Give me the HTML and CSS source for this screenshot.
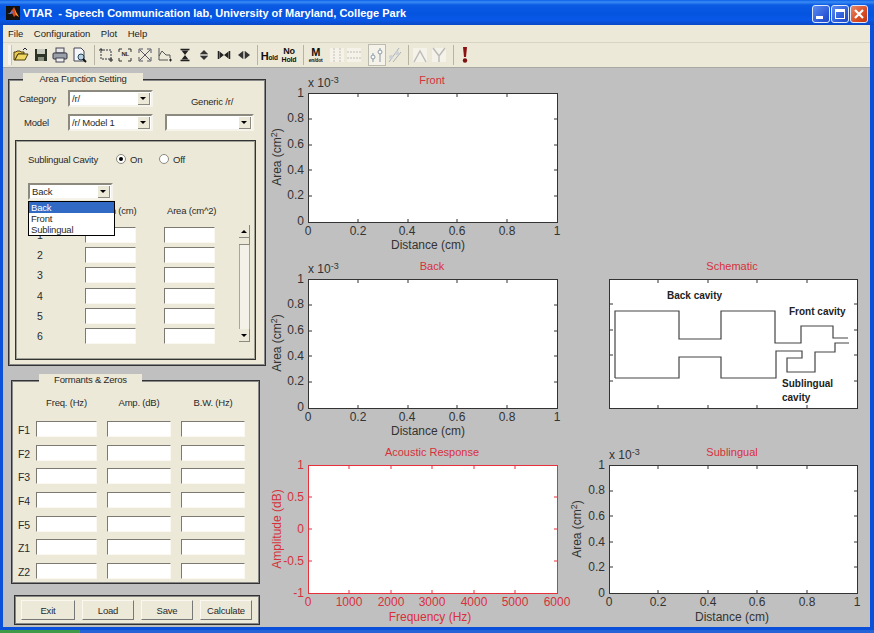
FILE: index.html
```html
<!DOCTYPE html>
<html lang="en">
<head>
    <meta charset="UTF-8">
    <title>VTAR - Speech Communication lab, University of Maryland, College Park</title>
    <link rel="stylesheet" href="styles.css">
</head>
<body>
<div class="window">
    <!-- Title bar -->
    <div class="titlebar">
        <svg class="app-icon" width="14" height="14" viewBox="0 0 14 14">
            <rect width="14" height="14" fill="#111"/>
            <path d="M1 8l3-1 2-3 2-3 2 5 3 5-3-2-2 2-2-4-2 0z" fill="#d8481c"/>
            <path d="M1 8l3-1 2-3 1 3-2 1z" fill="#5a7fd0"/>
            <path d="M8 1l2 5 3 5-3-2z" fill="#f2a030"/>
        </svg>
        <span class="title-text">VTAR&nbsp; - Speech Communication lab, University of Maryland, College Park</span>
        <div class="win-buttons">
            <div class="win-btn"><span class="glyph-min"></span></div>
            <div class="win-btn"><span class="glyph-max"></span></div>
            <div class="win-btn close">
                <svg width="12" height="12" viewBox="0 0 12 12"><path d="M2 2l8 8M10 2l-8 8" stroke="#fff" stroke-width="2.2"/></svg>
            </div>
        </div>
    </div>

    <!-- Menu -->
    <div class="menubar">
        <span>File</span>
        <span>Configuration</span>
        <span>Plot</span>
        <span>Help</span>
    </div>

    <!-- Toolbar -->
    <div class="toolbar">
        <div class="grip"></div>
        <div class="tool first">
            <svg width="16" height="16" viewBox="0 0 16 16"><path d="M1 13V5h2l1-1h3l1 1h3v2H5L2 13z" fill="#e8c850" stroke="#4a3c10"/><path d="M2 13l3-6h10l-3 6z" fill="#f0d860" stroke="#4a3c10"/><path d="M10 3l2-2 2 2" fill="none" stroke="#223"/></svg>
        </div>
        <div class="tool">
            <svg width="16" height="16" viewBox="0 0 16 16"><path d="M2 2h12v12H2z" fill="#2c3428"/><rect x="4" y="2" width="8" height="5" fill="#c8ccc0"/><rect x="5" y="10" width="6" height="4" fill="#8a9080"/></svg>
        </div>
        <div class="tool">
            <svg width="16" height="16" viewBox="0 0 16 16"><rect x="4" y="1" width="8" height="5" fill="#e8e8e8" stroke="#445"/><rect x="1" y="6" width="14" height="6" rx="1" fill="#9aa0a8" stroke="#334"/><rect x="4" y="11" width="8" height="4" fill="#eee" stroke="#445"/></svg>
        </div>
        <div class="tool">
            <svg width="16" height="16" viewBox="0 0 16 16"><path d="M2 1h7l3 3v10H2z" fill="#f4f6fa" stroke="#445"/><circle cx="9" cy="10" r="3" fill="#b8d0e0" stroke="#245"/><path d="M11 12l3 3" stroke="#111" stroke-width="2"/></svg>
        </div>
        <div class="sep"></div>
        <div class="tool">
            <svg width="16" height="16" viewBox="0 0 16 16"><path d="M3 1v11h10V3H3" fill="none" stroke="#334" stroke-dasharray="2 1"/><path d="M1 3h4M13 11v4M11 13h4" stroke="#222"/></svg>
        </div>
        <div class="tool">
            <svg width="16" height="16" viewBox="0 0 16 16"><path d="M2 5V2h3M11 2h3v3M14 11v3h-3M5 14H2v-3" fill="none" stroke="#333"/></svg>
            <span class="tool-mini">NL</span>
        </div>
        <div class="tool">
            <svg width="16" height="16" viewBox="0 0 16 16"><path d="M3 3l10 10M13 3L3 13" stroke="#556"/><path d="M2 6V2h4M10 2h4v4M14 10v4h-4M6 14H2v-4" fill="none" stroke="#556"/></svg>
        </div>
        <div class="tool">
            <svg width="16" height="16" viewBox="0 0 16 16"><path d="M2 1v12h9" fill="none" stroke="#555"/><path d="M2 9l3-5 4 4h4v3" fill="none" stroke="#555"/><path d="M12 13h3M13.500 11.500v3" stroke="#222"/></svg>
        </div>
        <div class="tool">
            <svg width="16" height="16" viewBox="0 0 16 16"><path d="M3.500 2.500h9M3.500 13.500h9" stroke="#222" stroke-width="1.500"/><path d="M4.500 3.500h7L8 8zM4.500 12.500h7L8 8z" fill="#222"/></svg>
        </div>
        <div class="tool">
            <svg width="16" height="16" viewBox="0 0 16 16"><path d="M8 3l4 4H4zM8 13l4-4H4z" fill="#333"/><path d="M4 8h8" stroke="#777"/></svg>
        </div>
        <div class="tool">
            <svg width="16" height="16" viewBox="0 0 16 16"><path d="M2.500 4v8M13.500 4v8" stroke="#222" stroke-width="1.500"/><path d="M3.500 4.500v7L8 8zM12.500 4.500v7L8 8z" fill="#222"/></svg>
        </div>
        <div class="tool">
            <svg width="16" height="16" viewBox="0 0 16 16"><path d="M2 8l5-4v8zM14 8l-5-4v8z" fill="#333"/><path d="M8 4v8" stroke="#777"/></svg>
        </div>
        <div class="sep"></div>
        <div class="tool text-tool"><span class="big">H</span><span class="small">old</span></div>
        <div class="tool text-tool stacked"><span class="big-no">No</span><span class="small-hold">Hold</span></div>
        <div class="sep m-sep"></div>
        <div class="tool text-tool stacked"><span class="big-m">M</span><span class="small-dot">en/dot</span></div>
        <div class="tool faded wide-gap">
            <svg width="16" height="16" viewBox="0 0 16 16"><rect x="1" y="1" width="14" height="14" fill="#f6f4ec"/><path d="M5 1v14M11 1v14" stroke="#b8b8b0" stroke-dasharray="2 1"/></svg>
        </div>
        <div class="tool faded">
            <svg width="16" height="16" viewBox="0 0 16 16"><rect x="1" y="1" width="14" height="14" fill="#f6f4ec"/><path d="M1 5h14M1 11h14" stroke="#b8b8b0" stroke-dasharray="2 1"/></svg>
        </div>
        <div class="tool faded pressed">
            <svg width="16" height="16" viewBox="0 0 16 16"><path d="M4 6v9M11 1v14" stroke="#7c8ea0"/><circle cx="4" cy="10" r="2" fill="#fff" stroke="#7c8ea0"/><circle cx="11" cy="5" r="2" fill="#fff" stroke="#7c8ea0"/></svg>
        </div>
        <div class="tool faded">
            <svg width="16" height="16" viewBox="0 0 16 16"><path d="M3 15l10-14M7 15l8-10" stroke="#a0a8b4"/><circle cx="5" cy="10" r="2" fill="#c8ccd4"/><circle cx="11" cy="6" r="2" fill="#c8ccd4"/></svg>
        </div>
        <div class="sep"></div>
        <div class="tool faded">
            <svg width="16" height="16" viewBox="0 0 16 16"><rect x="1" y="1" width="14" height="14" fill="#f6f4ec"/><path d="M2 15l6-11 6 11" fill="none" stroke="#b4b4b4" stroke-width="1.500"/></svg>
        </div>
        <div class="tool faded">
            <svg width="16" height="16" viewBox="0 0 16 16"><rect x="1" y="1" width="14" height="14" fill="#f6f4ec"/><path d="M2 1l6 8 6-8M8 9v6" fill="none" stroke="#b4b4b4" stroke-width="1.500"/></svg>
        </div>
        <div class="sep"></div>
        <div class="tool">
            <svg width="16" height="16" viewBox="0 0 16 16"><path d="M6 0h4l-1 10H7z" fill="#8c1010"/><circle cx="8" cy="13.500" r="2.200" fill="#7c1010"/></svg>
        </div>
    </div>

    <div class="figure">
        <!-- Left side controls -->
        <div class="controls">
            <div class="panel area-panel">
                <div class="legend area-legend">Area Function Setting</div>
                <div class="top-grid">
                    <div class="label cat-label">Category</div>
                    <div class="combo cat-combo"><span>/r/</span><i class="arrow"></i></div>
                    <div class="label generic-label">Generic /r/</div>
                    <div class="label model-label">Model</div>
                    <div class="combo model-combo"><span>/r/ Model 1</span><i class="arrow"></i></div>
                    <div class="combo generic-combo"><span></span><i class="arrow"></i></div>
                </div>

                <div class="inner-panel">
                    <div class="radio-row">
                        <span class="label sub-label">Sublingual Cavity</span>
                        <span class="radio checked"></span><span class="label on-label">On</span>
                        <span class="radio"></span><span class="label">Off</span>
                    </div>
                    <div class="combo back-combo"><span>Back</span><i class="arrow"></i></div>

                    <!-- open dropdown over the table -->
                    <div class="dropdown">
                        <div class="active">Back</div>
                        <div>Front</div>
                        <div>Sublingual</div>
                    </div>

                    <div class="section-table">
                        <div class="section-rows">
                            <div class="section-head"><span class="col-len">Length (cm)</span><span class="col-area">Area (cm^2)</span></div>
                            <div class="section-row"><span class="num">1</span><input class="field" readonly><input class="field" readonly></div>
                            <div class="section-row"><span class="num">2</span><input class="field" readonly><input class="field" readonly></div>
                            <div class="section-row"><span class="num">3</span><input class="field" readonly><input class="field" readonly></div>
                            <div class="section-row"><span class="num">4</span><input class="field" readonly><input class="field" readonly></div>
                            <div class="section-row"><span class="num">5</span><input class="field" readonly><input class="field" readonly></div>
                            <div class="section-row"><span class="num">6</span><input class="field" readonly><input class="field" readonly></div>
                        </div>
                        <div class="scrollbar">
                            <div class="sb-btn"><i class="arrow up"></i></div>
                            <div class="sb-thumb"></div>
                            <div class="sb-track"></div>
                            <div class="sb-btn"><i class="arrow"></i></div>
                        </div>
                    </div>
                </div>
            </div>

            <div class="panel formant-panel">
                <div class="legend formant-legend">Formants &amp; Zeros</div>
                <div class="formant-grid">
                    <span></span><span class="head">Freq. (Hz)</span><span class="head">Amp. (dB)</span><span class="head">B.W. (Hz)</span>
                    <span class="label">F1</span><input class="field" readonly><input class="field" readonly><input class="field" readonly>
                    <span class="label">F2</span><input class="field" readonly><input class="field" readonly><input class="field" readonly>
                    <span class="label">F3</span><input class="field" readonly><input class="field" readonly><input class="field" readonly>
                    <span class="label">F4</span><input class="field" readonly><input class="field" readonly><input class="field" readonly>
                    <span class="label">F5</span><input class="field" readonly><input class="field" readonly><input class="field" readonly>
                    <span class="label">Z1</span><input class="field" readonly><input class="field" readonly><input class="field" readonly>
                    <span class="label">Z2</span><input class="field" readonly><input class="field" readonly><input class="field" readonly>
                </div>
            </div>

            <div class="panel button-panel">
                <button class="btn exit">Exit</button>
                <button class="btn">Load</button>
                <button class="btn">Save</button>
                <button class="btn">Calculate</button>
            </div>
        </div>

        <!-- Plots -->
        <div class="plots">
            <svg class="plot" width="300" height="186">
                <text class="ptitle" x="166" y="12">Front</text>
                <text class="tick" x="42" y="15">x 10<tspan class="sup" dy="-4">-3</tspan></text>
                <rect class="axes" x="42.500" y="21.500" width="249" height="129"/>
                <path class="ticks" d="M92 22v3M142 22v3M191 22v3M241 22v3M92 150v-3M142 150v-3M191 150v-3M241 150v-3M43 47h3M43 73h3M43 98h3M43 124h3M291 47h-3M291 73h-3M291 98h-3M291 124h-3"/>
                <g class="yticks"><text x="38" y="25">1</text><text x="38" y="50">0.8</text><text x="38" y="76">0.6</text><text x="38" y="102">0.4</text><text x="38" y="127">0.2</text><text x="38" y="153">0</text></g>
                <g class="xticks"><text x="42" y="163">0</text><text x="92" y="163">0.2</text><text x="141" y="163">0.4</text><text x="191" y="163">0.6</text><text x="241" y="163">0.8</text><text x="291" y="163">1</text></g>
                <text class="xlabel" x="162" y="177">Distance (cm)</text>
                <text class="ylabel" transform="translate(15 85) rotate(-90)">Area (cm<tspan class="sup" dy="-4">2</tspan><tspan dy="4">)</tspan></text>
            </svg>
            <svg class="plot" width="300" height="186"></svg>

            <svg class="plot" width="300" height="186">
                <text class="ptitle" x="166" y="12">Back</text>
                <text class="tick" x="42" y="15">x 10<tspan class="sup" dy="-4">-3</tspan></text>
                <rect class="axes" x="42.500" y="21.500" width="249" height="129"/>
                <path class="ticks" d="M92 22v3M142 22v3M191 22v3M241 22v3M92 150v-3M142 150v-3M191 150v-3M241 150v-3M43 47h3M43 73h3M43 98h3M43 124h3M291 47h-3M291 73h-3M291 98h-3M291 124h-3"/>
                <g class="yticks"><text x="38" y="25">1</text><text x="38" y="50">0.8</text><text x="38" y="76">0.6</text><text x="38" y="102">0.4</text><text x="38" y="127">0.2</text><text x="38" y="153">0</text></g>
                <g class="xticks"><text x="42" y="163">0</text><text x="92" y="163">0.2</text><text x="141" y="163">0.4</text><text x="191" y="163">0.6</text><text x="241" y="163">0.8</text><text x="291" y="163">1</text></g>
                <text class="xlabel" x="162" y="177">Distance (cm)</text>
                <text class="ylabel" transform="translate(15 85) rotate(-90)">Area (cm<tspan class="sup" dy="-4">2</tspan><tspan dy="4">)</tspan></text>
            </svg>
            <svg class="plot" width="300" height="186">
                <text class="ptitle" x="164" y="12">Schematic</text>
                <rect class="axes" x="41.500" y="21.500" width="248" height="129"/>
                <path class="ticks" d="M90 22v3M140 22v3M189 22v3M239 22v3M90 150v-3M140 150v-3M189 150v-3M239 150v-3M42 46h3M42 72h3M42 97h3M42 123h3M289 46h-3M289 72h-3M289 97h-3M289 123h-3"/>
                <path class="shape" d="M47 120V53H111V81H153V53H207V85H233V68H265V80H280M47 120H111V99H153V120H208V93H234V100H219V114H247V94H267V85H281"/>
                <text class="note" x="99" y="41">Back cavity</text>
                <text class="note" x="221" y="57">Front cavity</text>
                <text class="note" x="214" y="129">Sublingual</text>
                <text class="note" x="214" y="143">cavity</text>
            </svg>

            <svg class="plot red" width="300" height="186">
                <text class="ptitle" x="166" y="12">Acoustic Response</text>
                <rect class="axes" x="42.500" y="21.500" width="249" height="128"/>
                <path class="ticks" d="M83 22v3M125 22v3M166 22v3M208 22v3M249 22v3M83 149v-3M125 149v-3M166 149v-3M208 149v-3M249 149v-3M43 53h3M43 85h3M43 117h3M291 53h-3M291 85h-3M291 117h-3"/>
                <g class="yticks"><text x="38" y="25">1</text><text x="38" y="57">0.5</text><text x="38" y="89">0</text><text x="38" y="121">-0.5</text><text x="38" y="153">-1</text></g>
                <g class="xticks"><text x="42" y="162">0</text><text x="83" y="162">1000</text><text x="125" y="162">2000</text><text x="166" y="162">3000</text><text x="208" y="162">4000</text><text x="249" y="162">5000</text><text x="291" y="162">6000</text></g>
                <text class="xlabel" x="164" y="177">Frequency (Hz)</text>
                <text class="ylabel" transform="translate(15 85) rotate(-90)">Amplitude (dB)</text>
            </svg>
            <svg class="plot" width="300" height="186">
                <text class="ptitle" x="164" y="12">Sublingual</text>
                <text class="tick" x="41" y="15">x 10<tspan class="sup" dy="-4">-3</tspan></text>
                <rect class="axes" x="41.500" y="21.500" width="248" height="128"/>
                <path class="ticks" d="M90 22v3M140 22v3M189 22v3M239 22v3M90 149v-3M140 149v-3M189 149v-3M239 149v-3M42 47h3M42 72h3M42 98h3M42 123h3M289 47h-3M289 72h-3M289 98h-3M289 123h-3"/>
                <g class="yticks"><text x="37" y="25">1</text><text x="37" y="50">0.8</text><text x="37" y="76">0.6</text><text x="37" y="102">0.4</text><text x="37" y="127">0.2</text><text x="37" y="153">0</text></g>
                <g class="xticks"><text x="41" y="162">0</text><text x="90" y="162">0.2</text><text x="140" y="162">0.4</text><text x="189" y="162">0.6</text><text x="239" y="162">0.8</text><text x="289" y="162">1</text></g>
                <text class="xlabel" x="164" y="177">Distance (cm)</text>
                <text class="ylabel" transform="translate(13 85) rotate(-90)">Area (cm<tspan class="sup" dy="-4">2</tspan><tspan dy="4">)</tspan></text>
            </svg>
        </div>
    </div>

    <div class="taskbar"><div class="start"></div></div>
</div>
</body>
</html>
```

FILE: styles.css
```css
html, body {
    margin: 0;
    padding: 0;
    background: #0a4bd0;
}
body {
    width: 874px;
    height: 633px;
    overflow: hidden;
    font-family: "Liberation Sans", Arial, sans-serif;
    font-size: 9.5px;
    letter-spacing: -0.2px;
    color: #2a2a2a;
}
.window {
    width: 874px;
    height: 633px;
    display: flex;
    flex-direction: column;
    box-sizing: border-box;
    padding: 0 4px 0 3px;
    background: #0a50d8;
}

/* title bar */
.titlebar {
    height: 25px;
    margin: 0 -4px 0 -3px;
    padding: 0 6px;
    display: flex;
    align-items: center;
    flex: none;
    background: linear-gradient(#0a5fe8 0, #3a8cf4 2px, #0a5ae4 5px, #0554e0 14px, #0a58e8 20px, #0a48c4 25px);
    color: #fff;
}
.app-icon {
    flex: none;
    margin-top: 1px;
}
.title-text {
    margin-left: 3px;
    font-size: 11px;
    font-weight: bold;
    letter-spacing: 0;
    white-space: nowrap;
}
.win-buttons {
    margin-left: auto;
    margin-top: 3px;
    display: flex;
    gap: 1px;
}
.win-btn {
    width: 18px;
    height: 18px;
    box-sizing: border-box;
    border: 1px solid #dfe8fa;
    border-radius: 3px;
    background: linear-gradient(135deg, #5a8cf0, #2a58d8 70%, #2048c0);
    position: relative;
    display: flex;
    align-items: center;
    justify-content: center;
}
.win-btn.close {
    background: linear-gradient(135deg, #e88868, #d84c24 60%, #c03810);
}
.glyph-min {
    position: absolute;
    left: 3px;
    bottom: 3px;
    width: 7px;
    height: 3px;
    background: #fff;
}
.glyph-max {
    width: 8px;
    height: 6px;
    border: 1px solid #fff;
    border-top-width: 3px;
}

/* menu */
.menubar {
    height: 17px;
    flex: none;
    display: flex;
    align-items: center;
    gap: 10.5px;
    padding-left: 5px;
    background: #ece9d8;
    color: #222;
    font-size: 9.5px;
    letter-spacing: 0;
}

/* toolbar */
.toolbar {
    height: 24px;
    flex: none;
    display: flex;
    align-items: center;
    background: #ece9d8;
    border-top: 1px solid #d8d4c4;
    border-bottom: 1px solid #a8a8a4;
    padding-left: 5px;
}
.grip {
    width: 3px;
    height: 20px;
    background: #f6f4ec;
    border-right: 1px solid #c8c4b4;
}
.tool {
    width: 16px;
    height: 20px;
    margin-right: 3.7px;
    display: flex;
    align-items: center;
    justify-content: center;
    position: relative;
    flex: none;
}
.tool.first {
    margin-left: 1px;
}
.tool.wide-gap {
    margin-left: 2px;
    margin-right: 1px;
}
.tool.pressed {
    background: #f6f4ec;
    outline: 1px solid #b4b4a8;
    margin-left: 3px;
    margin-right: 1px;
}
.tool.faded {
    opacity: 0.85;
}
.tool-mini {
    position: absolute;
    left: 4px;
    top: 6px;
    font-size: 6px;
    font-weight: bold;
    letter-spacing: -0.3px;
}
.sep {
    width: 1px;
    height: 20px;
    margin: 0 3px 0 2px;
    background: #b8b4a4;
    flex: none;
}
.sep.m-sep {
    margin-right: 4px;
}
.text-tool {
    align-items: baseline;
    color: #111;
    font-weight: bold;
    line-height: 1;
    padding-top: 6px;
    box-sizing: border-box;
    white-space: nowrap;
}
.text-tool .big {
    font-size: 11px;
}
.text-tool .small {
    font-size: 6.5px;
}
.stacked {
    flex-direction: column;
    align-items: center;
    justify-content: center;
    padding-top: 0;
}
.big-no {
    font-size: 9px;
    line-height: 9px;
}
.small-hold {
    font-size: 7px;
    line-height: 8px;
}
.big-m {
    font-size: 11px;
    line-height: 10px;
}
.small-dot {
    font-size: 5px;
    line-height: 6px;
}

/* figure area */
.figure {
    flex: 1;
    min-height: 0;
    display: flex;
    background: #c0c0c0;
}
.controls {
    width: 263px;
    flex: none;
    padding: 11px 0 0 5px;
    box-sizing: border-box;
}
.panel {
    background: #ece9d8;
    border: 1px solid #333;
    box-shadow: inset 0 0 0 1px #888;
    box-sizing: border-box;
    position: relative;
}
.legend {
    position: absolute;
    top: -7px;
    height: 9px;
    line-height: 11px;
    text-align: center;
    background: #ece9d8;
    box-sizing: border-box;
}
.area-legend {
    left: 14px;
    width: 120px;
}
.formant-legend {
    left: 27px;
    width: 103px;
}
.label {
    white-space: nowrap;
}

.area-panel {
    width: 258px;
    height: 287px;
}
.top-grid {
    display: grid;
    grid-template-columns: 59px 85px 12px 89px;
    grid-template-rows: 17px 17px;
    row-gap: 7px;
    padding: 10px 0 0 0;
    height: 51px;
    box-sizing: content-box;
    align-items: center;
}
.cat-label {
    padding-left: 10px;
}
.model-label {
    padding-left: 15px;
    grid-column: 1;
    grid-row: 2;
}
.cat-combo, .model-combo {
    grid-column: 2;
}
.generic-label {
    grid-column: 4;
    text-align: center;
    padding-top: 5px;
    padding-left: 5px;
}
.generic-combo {
    grid-column: 4;
    grid-row: 2;
}
.model-combo {
    grid-row: 2;
}

.combo {
    height: 17px;
    box-sizing: border-box;
    display: flex;
    align-items: center;
    justify-content: space-between;
    background: #fff;
    border: 2px solid;
    border-color: #8c8a7e #f6f4ea #f6f4ea #8c8a7e;
    padding: 0 1px 0 2px;
}
.arrow {
    width: 12px;
    height: 12px;
    background: #ece9d8;
    border-right: 1px solid #8c8a7e;
    border-bottom: 1px solid #8c8a7e;
    box-sizing: border-box;
    position: relative;
    display: block;
    flex: none;
}
.arrow::after {
    content: "";
    position: absolute;
    left: 2px;
    top: 4px;
    border: 3.5px solid transparent;
    border-top-color: #000;
    border-bottom: 0;
}
.arrow.up::after {
    border-top: 0;
    border-bottom: 3.5px solid #000;
}

.inner-panel {
    margin: -1px 0 0 6px;
    width: 241px;
    height: 220px;
    border: 1px solid #333;
    box-shadow: inset 0 0 0 1px #a0a094;
    box-sizing: border-box;
    position: relative;
    padding: 11px 0 0 12px;
}
.radio-row {
    display: flex;
    align-items: center;
    height: 14px;
}
.sub-label {
    width: 88px;
}
.on-label {
    width: 29px;
}
.radio {
    width: 10px;
    height: 10px;
    border-radius: 50%;
    background: #fff;
    border: 1px solid #8c8a7e;
    box-sizing: border-box;
    margin-right: 4px;
    position: relative;
}
.radio.checked::after {
    content: "";
    position: absolute;
    left: 2px;
    top: 2px;
    width: 4px;
    height: 4px;
    border-radius: 50%;
    background: #000;
}
.back-combo {
    width: 85px;
    margin-top: 17px;
}
.dropdown {
    position: absolute;
    left: 12px;
    top: 60px;
    width: 87px;
    height: 35px;
    border: 1px solid #000;
    background: #fff;
    box-sizing: border-box;
    z-index: 2;
    line-height: 11px;
}
.dropdown div {
    padding-left: 2px;
}
.dropdown .active {
    background: #316ac5;
    color: #fff;
}

.section-table {
    display: flex;
    margin-top: 1px;
}
.section-rows {
    width: 211px;
}
.section-head {
    height: 20px;
    position: relative;
    margin-top: 4px;
}
.section-head span {
    position: absolute;
    top: 0;
    white-space: nowrap;
}
.col-len {
    left: 60px;
}
.col-area {
    left: 139px;
}
.section-row {
    display: flex;
    align-items: center;
    height: 20.2px;
}
.num {
    width: 57px;
    flex: none;
    padding-left: 9px;
    box-sizing: border-box;
    font-size: 10.5px;
}
.field {
    width: 51px;
    height: 16px;
    padding: 0;
    margin: 0 28px 0 0;
    flex: none;
    box-sizing: border-box;
    background: #fff;
    border: 1px solid;
    border-color: #7c7a70 #faf8f0 #faf8f0 #7c7a70;
    outline: none;
    display: block;
}
.section-row .field:last-child {
    margin-right: 0;
}
.scrollbar {
    width: 11px;
    height: 117px;
    margin: 24px 0 0 0;
    display: flex;
    flex-direction: column;
}
.sb-btn {
    height: 13px;
    flex: none;
}
.sb-btn .arrow {
    width: 11px;
    height: 13px;
}
.sb-btn .arrow::after {
    top: 5px;
}
.sb-thumb {
    height: 6px;
    flex: none;
    background: #ece9d8;
    border-bottom: 1px solid #8c8a7e;
    border-right: 1px solid #8c8a7e;
}
.sb-track {
    flex: 1;
    background: #f4f2e8;
    border-left: 1px solid #a8a698;
    border-right: 1px solid #a8a698;
}

.formant-panel {
    width: 249px;
    height: 204px;
    margin: 14px 0 0 3px;
}
.formant-grid {
    display: grid;
    grid-template-columns: 14px 61px 64px 64px;
    column-gap: 10px;
    grid-template-rows: 40px repeat(7, 23.700px);
    align-items: start;
}
.formant-grid .head {
    text-align: center;
    padding-top: 16px;
}
.formant-grid .label {
    padding: 3px 0 0 6px;
    font-size: 10.5px;
}
.formant-grid .field {
    width: 100%;
    margin: 0;
}

.button-panel {
    width: 246px;
    height: 30px;
    margin: 11px 0 0 6px;
    display: flex;
    align-items: center;
    gap: 7px;
    padding-left: 6px;
}
.btn {
    width: 52px;
    height: 20px;
    padding: 0;
    font-family: "Liberation Sans", Arial, sans-serif;
    font-size: 9.5px;
    letter-spacing: -0.2px;
    color: #2a2a2a;
    background: #ece9d8;
    border: 1px solid;
    border-color: #faf8f0 #777 #777 #faf8f0;
}
.btn.exit {
    width: 54px;
}

/* plots */
.plots {
    display: grid;
    grid-template-columns: 302px 300px;
    grid-template-rows: repeat(3, 186px);
    padding-top: 4px;
}
.plot {
    display: block;
    overflow: visible;
}
.plot text {
    font-family: "Liberation Sans", Arial, sans-serif;
    font-size: 12px;
    letter-spacing: 0;
    fill: #333;
}
.plot .ptitle {
    font-size: 11px;
    fill: #d8303c;
    text-anchor: middle;
}
.plot .sup {
    font-size: 9px;
}
.axes {
    fill: #fff;
    stroke: #333;
    stroke-width: 1;
}
.ticks {
    fill: none;
    stroke: #333;
    stroke-width: 1;
}
.yticks text {
    text-anchor: end;
}
.xticks text {
    text-anchor: middle;
}
.plot .xlabel {
    text-anchor: middle;
}
.plot .ylabel {
    text-anchor: middle;
}
.shape {
    fill: none;
    stroke: #444;
    stroke-width: 1.200;
}
.plot .note {
    font-size: 10px;
    font-weight: bold;
    fill: #222;
}
.red .axes, .red .ticks {
    stroke: #e8303c;
}
.plot.red text {
    fill: #d8303c;
}

.taskbar {
    height: 6px;
    flex: none;
    margin: 0 -4px 0 -3px;
    background: linear-gradient(#0a50d8 0, #0a50d8 3px, #2464d8 3px);
    position: relative;
}
.start {
    position: absolute;
    left: 0;
    bottom: 0;
    width: 80px;
    height: 3px;
    background: #3c9a48;
}
```
